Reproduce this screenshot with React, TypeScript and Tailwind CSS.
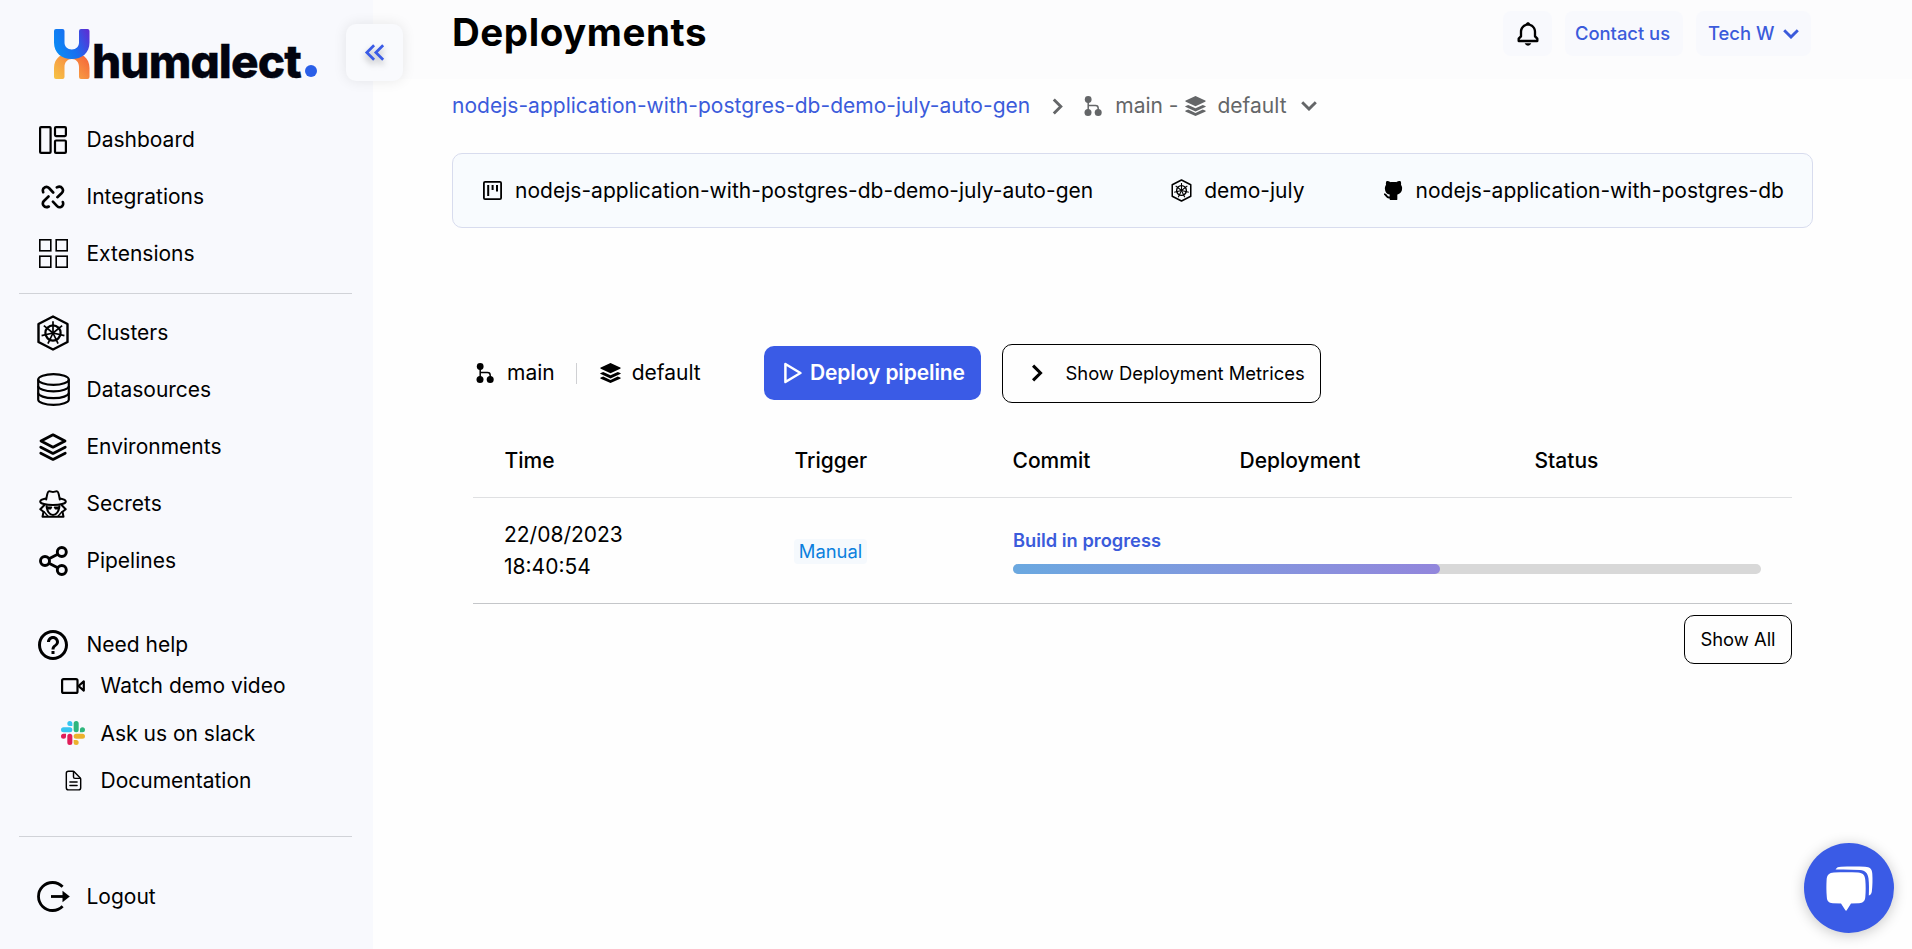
import React from "react";
import { BiBell } from "react-icons/bi";
import { MdHelpOutline, MdKeyboardDoubleArrowLeft } from "react-icons/md";
import { TbBrandGithubFilled } from "react-icons/tb";
import { IoDocumentTextOutline } from "react-icons/io5";

type IconProps = { className?: string };

function DashboardIcon() {
  return (
    <svg className="h-7 w-7" viewBox="0 0 28 28" fill="none" stroke="currentColor" strokeWidth="2.200">
      <rect x="1.100" y="1.100" width="10.500" height="25.800" rx="1" />
      <rect x="16" y="1.100" width="10.900" height="9" rx="1" />
      <rect x="16" y="14.500" width="10.900" height="12.400" rx="1" />
    </svg>
  );
}

function IntegrationsIcon() {
  return (
    <svg className="h-6 w-6" viewBox="0 0 24 24" fill="none" stroke="currentColor" strokeWidth="2.600" strokeLinecap="round" strokeLinejoin="round">
      <path d="M2.200 7.200C1.400 5 2.200 3 4 2.200c1.300-.6 2.900-.3 4 .8l4.200 4.500" />
      <path d="M15.800 2.400c2-1 4.300-.8 5.400.8 1.100 1.600.9 3.500-.4 4.800l-4.400 4.200" />
      <path d="M7.800 21.500c-2 1-4.200.6-5.300-1-1-1.500-.8-3.200.4-4.500l4.600-4.500" />
      <path d="M21.800 17c.9 2.100 0 4.200-1.900 5-1.300.5-2.700.2-3.800-.9l-4.200-4.500" />
    </svg>
  );
}

function ExtensionsIcon() {
  return (
    <svg className="h-[29px] w-[29px]" viewBox="0 0 29 29" fill="none" stroke="currentColor" strokeWidth="1.600">
      <rect x=".8" y=".8" width="11" height="11" />
      <rect x="17.200" y=".8" width="11" height="11" />
      <rect x=".8" y="17.200" width="11" height="11" />
      <rect x="17.200" y="17.200" width="11" height="11" />
    </svg>
  );
}

function ClusterIcon({ className }: IconProps) {
  const spokes = [0, 1, 2, 3, 4, 5, 6];
  return (
    <svg className={className} viewBox="0 0 32 36" fill="none" stroke="currentColor" strokeWidth="2.400">
      <path d="M16 1.500 30.500 9v18L16 34.500 1.500 27V9Z" strokeLinejoin="round" />
      <circle cx="16" cy="18" r="7.600" strokeWidth="2.200" />
      {spokes.map((s) => (
        <path key={s} d="M16 18V6.300" strokeWidth="1.700" transform={`rotate(${(s * 360) / 7} 16 18)`} />
      ))}
    </svg>
  );
}

function DatabaseIcon() {
  return (
    <svg className="h-[33px] w-[33px]" viewBox="0 0 33 33" fill="none" stroke="currentColor" strokeWidth="2.200">
      <ellipse cx="16.500" cy="6.500" rx="15.300" ry="5.400" />
      <path d="M1.200 6.500v20c0 3 6.800 5.400 15.300 5.400s15.300-2.400 15.300-5.400v-20" />
      <path d="M1.200 13c0 3 6.800 5.400 15.300 5.400S31.800 16 31.800 13M1.200 19.800c0 3 6.800 5.400 15.300 5.400s15.300-2.400 15.300-5.400" />
    </svg>
  );
}

function LayersOutlineIcon() {
  return (
    <svg className="h-7 w-7" viewBox="0 0 28 28" fill="none" stroke="currentColor" strokeWidth="2.800" strokeLinecap="round" strokeLinejoin="round">
      <path d="M14 1.800 26 8 14 14.200 2 8Z" />
      <path d="m1.800 14.200 12.200 6.200 12.200-6.200M1.800 20.200 14 26.400l12.200-6.200" />
    </svg>
  );
}

function SpyIcon() {
  return (
    <svg className="h-7 w-7" viewBox="0 0 28 28" fill="none" stroke="currentColor" strokeWidth="2" strokeLinejoin="round" strokeLinecap="round">
      <path d="M7.200 9.500C8 6 8.200 1.300 10.200 1.300c1.500 0 2.300.7 3.800.7s2.300-.7 3.800-.7c2 0 2.200 4.700 3 8.200" />
      <path d="M7 8.600C3.500 9.200 1.200 10.300 1.200 11.600c0 2 5.700 3.400 12.800 3.400s12.800-1.400 12.800-3.400c0-1.300-2.300-2.400-5.800-3" />
      <path d="M5.200 15.200 1.300 19.200l3.200 2.500M22.800 15.200l3.900 4-3.200 2.500M4.500 21.700l-1 5h21l-1-5" />
      <path d="M7.600 16.200c.4 5 3 8.800 6.400 8.800s6-3.800 6.400-8.800" />
      <path d="M8.500 17.300h4l-1 1.500H9.500ZM15.500 17.300h4l-1 1.500h-2ZM5 21.700l4 4.600M23 21.700l-4 4.600" strokeWidth="1.400" />
    </svg>
  );
}

function PipelinesIcon() {
  return (
    <svg className="h-[30px] w-[29px]" viewBox="0 0 29 30" fill="none" stroke="currentColor" strokeWidth="2.900">
      <circle cx="6" cy="15" r="4.500" />
      <circle cx="22.800" cy="6" r="4.500" />
      <circle cx="22.800" cy="24" r="4.500" />
      <path d="m10 12.800 8.700-4.600M10 17.200l8.700 4.600" />
    </svg>
  );
}

function VideoIcon() {
  return (
    <svg className="h-4 w-6" viewBox="0 0 24 16" fill="none" stroke="currentColor" strokeWidth="2.200" strokeLinejoin="round">
      <rect x="1.100" y="1.100" width="15.400" height="13.800" rx="1.500" />
      <path d="m17.500 8 5.300-4.600v9.200Z" />
    </svg>
  );
}

function SlackIcon() {
  return (
    <svg className="h-6 w-6" viewBox="0 0 24 24">
      <path fill="#E01E5A" d="M5.042 15.165a2.528 2.528 0 0 1-2.520 2.523A2.528 2.528 0 0 1 0 15.165a2.527 2.527 0 0 1 2.522-2.520h2.520zM6.313 15.165a2.527 2.527 0 0 1 2.521-2.520 2.527 2.527 0 0 1 2.521 2.520v6.313A2.528 2.528 0 0 1 8.834 24a2.528 2.528 0 0 1-2.521-2.522z" />
      <path fill="#36C5F0" d="M8.834 5.042a2.528 2.528 0 0 1-2.521-2.520A2.528 2.528 0 0 1 8.834 0a2.528 2.528 0 0 1 2.521 2.522v2.520zM8.834 6.313a2.528 2.528 0 0 1 2.521 2.521 2.528 2.528 0 0 1-2.521 2.521H2.522A2.528 2.528 0 0 1 0 8.834a2.528 2.528 0 0 1 2.522-2.521z" />
      <path fill="#2EB67D" d="M18.956 8.834a2.528 2.528 0 0 1 2.522-2.521A2.528 2.528 0 0 1 24 8.834a2.528 2.528 0 0 1-2.522 2.521h-2.522zM17.688 8.834a2.528 2.528 0 0 1-2.523 2.521 2.527 2.527 0 0 1-2.520-2.521V2.522A2.527 2.527 0 0 1 15.165 0a2.528 2.528 0 0 1 2.523 2.522z" />
      <path fill="#ECB22E" d="M15.165 18.956a2.528 2.528 0 0 1 2.523 2.522A2.528 2.528 0 0 1 15.165 24a2.527 2.527 0 0 1-2.520-2.522v-2.522zM15.165 17.688a2.527 2.527 0 0 1-2.520-2.523 2.526 2.526 0 0 1 2.520-2.520h6.313A2.527 2.527 0 0 1 24 15.165a2.528 2.528 0 0 1-2.522 2.523z" />
    </svg>
  );
}

function LogoutIcon() {
  return (
    <svg className="h-[31px] w-[33px]" viewBox="0 0 33 31" fill="none" stroke="currentColor" strokeWidth="2.800">
      <path d="M25.600 5.800A14 14 0 1 0 25.600 25.200" />
      <path d="M14 15.500h13" />
      <path d="M25.500 9.800 32.800 15.500l-7.300 5.700Z" fill="currentColor" stroke="none" />
    </svg>
  );
}

function BranchIcon() {
  return (
    <svg className="h-5 w-[18px] shrink-0" viewBox="0 0 18 20" fill="none">
      <circle cx="4.200" cy="3.500" r="3.400" fill="currentColor" />
      <circle cx="4" cy="16.500" r="3.500" fill="currentColor" />
      <circle cx="14.200" cy="16.500" r="3.500" fill="currentColor" />
      <path d="M4.200 3v14M4.200 9.500h7.300c1.700 0 2.700 1 2.700 2.700v3" stroke="currentColor" strokeWidth="1.500" />
    </svg>
  );
}

function StackIcon() {
  return (
    <svg className="h-5 w-[21px] shrink-0" viewBox="0 0 21 20" fill="currentColor">
      <path d="M10.500 0 20.200 4.600c.7.300.7.800 0 1.100L10.500 10.200.8 5.700C.1 5.400.1 4.900.8 4.600Z" />
      <path d="m3.200 8.900 7.300 3.300 7.300-3.300 2.400 1c.7.300.7.900 0 1.200l-9.700 4.300L.8 11.100c-.7-.3-.7-.9 0-1.200Z" />
      <path d="m3.200 13.600 7.300 3.300 7.300-3.300 2.400 1c.7.300.7.900 0 1.200L10.500 20 .8 15.800c-.7-.3-.7-.9 0-1.200Z" />
    </svg>
  );
}

function BoardIcon() {
  return (
    <svg className="h-[19px] w-[19px] shrink-0" viewBox="0 0 19 19" fill="none" stroke="currentColor" strokeWidth="1.800">
      <rect x=".9" y=".9" width="17.200" height="17.200" rx="1.200" />
      <path d="M5.200 4v11M9.600 4v5M14 4v6.500" strokeWidth="2" />
    </svg>
  );
}

function Chevron({ className, d = "m1.800 1.500 7 7-7 7", box = "0 0 11 17" }: IconProps & { d?: string; box?: string }) {
  return (
    <svg className={className} viewBox={box} fill="none" stroke="currentColor" strokeWidth="2.900">
      <path d={d} />
    </svg>
  );
}

function LogoMark() {
  return (
    <svg className="h-[50px] w-9 shrink-0" viewBox="0 0 36 50">
      <defs>
        <linearGradient id="markTop" x1="0" y1=".6" x2="1" y2=".2">
          <stop offset="0" stopColor="#0a8bf5" />
          <stop offset=".5" stopColor="#1a6df0" />
          <stop offset="1" stopColor="#5a30d4" />
        </linearGradient>
        <linearGradient id="markBottom" x1="0" y1="1" x2="1" y2=".3">
          <stop offset="0" stopColor="#f6c545" />
          <stop offset=".5" stopColor="#f79a43" />
          <stop offset="1" stopColor="#f5693a" />
        </linearGradient>
      </defs>
      <path d="M0 48V39C0 29 8 23.500 18 23.500S35.500 29 35.500 39v9a2 2 0 0 1-2 2h-6.500a2 2 0 0 1-2-2V38c0-5-3-8-7.200-8s-7.300 3-7.300 8v10a2 2 0 0 1-2 2H2a2 2 0 0 1-2-2Z" fill="url(#markBottom)" />
      <path d="M0 2a2 2 0 0 1 2-2h6.500a2 2 0 0 1 2 2v11.500c0 4 3 7 7.300 7s7.200-3 7.200-7V2a2 2 0 0 1 2-2h6.500a2 2 0 0 1 2 2v11.500C35.500 24 28 30 17.800 30S0 24 0 13.500Z" fill="url(#markTop)" />
    </svg>
  );
}

function NavItem({ icon, label }: { icon: React.ReactNode; label: string }) {
  return (
    <a className="flex h-[57px] items-center pl-[36px]">
      <span className="flex w-[34px] justify-center">{icon}</span>
      <span className="ml-[16.500px] text-[21px] leading-none">{label}</span>
    </a>
  );
}

function SubItem({ icon, label }: { icon: React.ReactNode; label: string }) {
  return (
    <a className="flex h-[47.500px] items-center pl-[61px]">
      <span className="flex w-6 justify-center">{icon}</span>
      <span className="ml-[15.500px] text-[21px] leading-none">{label}</span>
    </a>
  );
}

function Sidebar() {
  return (
    <aside className="flex h-[949px] w-[373px] shrink-0 flex-col bg-[#f8f9fd]">
      <div className="flex h-[111px] shrink-0 pl-[54px] pt-[29px]">
        <LogoMark />
        <span className="ml-[2px] h-[50px] w-[210px] shrink-0 whitespace-nowrap text-[46px] font-extrabold leading-[64px] tracking-[-0.900px] text-[#02040f] [font-feature-settings:'cv11'] [-webkit-text-stroke:0.400px_#02040f]">humalect</span>
        <span className="ml-[3px] mt-9 h-3 w-3 shrink-0 rounded-full bg-[#2a5fe8]" />
      </div>
      <nav>
        <NavItem icon={<DashboardIcon />} label="Dashboard" />
        <NavItem icon={<IntegrationsIcon />} label="Integrations" />
        <NavItem icon={<ExtensionsIcon />} label="Extensions" />
      </nav>
      <hr className="ml-[19px] mt-[11px] w-[333px] border-[#d1d3d8]" />
      <nav className="mt-[10px]">
        <NavItem icon={<ClusterIcon className="h-[36px] w-[32px]" />} label="Clusters" />
        <NavItem icon={<DatabaseIcon />} label="Datasources" />
        <NavItem icon={<LayersOutlineIcon />} label="Environments" />
        <NavItem icon={<SpyIcon />} label="Secrets" />
        <NavItem icon={<PipelinesIcon />} label="Pipelines" />
      </nav>
      <div className="mt-[27px]">
        <NavItem icon={<MdHelpOutline className="h-9 w-9 shrink-0" />} label="Need help" />
      </div>
      <div className="-mt-[11px]">
        <SubItem icon={<VideoIcon />} label="Watch demo video" />
        <SubItem icon={<SlackIcon />} label="Ask us on slack" />
        <SubItem icon={<IoDocumentTextOutline className="h-[23px] w-[23px]" />} label="Documentation" />
      </div>
      <hr className="ml-[19px] mt-[31px] w-[333px] border-[#d1d3d8]" />
      <div className="mt-[31.500px]">
        <NavItem icon={<LogoutIcon />} label="Logout" />
      </div>
    </aside>
  );
}

function Header() {
  return (
    <header className="flex h-[79px] shrink-0 bg-[#fcfcfd] pl-[79px] text-[18.400px] font-medium text-[#3b5bdb]">
      <h1 className="h-[65px] text-[38.500px] font-bold leading-[65px] tracking-[0.550px] text-black">Deployments</h1>
      <div className="ml-auto mr-[101px] flex items-start gap-[13px] pt-[11px]">
        <button className="flex h-[45px] w-[49px] items-center justify-center rounded-lg bg-[#f8f9fd] text-black">
          <BiBell className="h-7 w-7" />
        </button>
        <button className="h-[45px] w-[118px] rounded-lg bg-[#f8f9fd] pr-[3px]">Contact us</button>
        <button className="flex h-[45px] w-[115px] items-center rounded-lg bg-[#f8f9fd] pl-3">
          Tech W
          <Chevron className="ml-[9px] h-[10px] w-4" d="m1.200 1.200 6.800 6.800 6.800-6.800" box="0 0 16 10" />
        </button>
      </div>
    </header>
  );
}

function Breadcrumb() {
  return (
    <div className="flex h-[54px] items-center text-[21px] text-[#646668]">
      <span className="tracking-[0.020px] text-[#3b5bdb]">nodejs-application-with-postgres-db-demo-july-auto-gen</span>
      <Chevron className="ml-[22px] h-[17px] w-[11px]" />
      <span className="ml-[21px]"><BranchIcon /></span>
      <span className="ml-[13px]">main -</span>
      <span className="ml-[6px]"><StackIcon /></span>
      <span className="ml-3">default</span>
      <Chevron className="ml-[14px] h-[10px] w-4" d="m1.200 1.200 6.800 6.800 6.800-6.800" box="0 0 16 10" />
    </div>
  );
}

function InfoBar() {
  return (
    <section className="mt-5 flex h-[75px] w-[1361px] items-center justify-between rounded-[10px] border border-[#d8dcee] bg-[#f8fbfe] pl-[30px] pr-[28px] text-[21px] tracking-[0.020px]">
      <div className="flex items-center gap-[13px]"><BoardIcon />nodejs-application-with-postgres-db-demo-july-auto-gen</div>
      <div className="ml-[1px] flex items-center gap-3"><ClusterIcon className="h-[23px] w-[21px]" />demo-july</div>
      <div className="flex items-center gap-[11px]"><TbBrandGithubFilled className="h-[23px] w-[23px]" />nodejs-application-with-postgres-db</div>
    </section>
  );
}

function Actions() {
  return (
    <div className="flex h-[58px] items-center pl-[3px] text-[21px]">
      <BranchIcon />
      <span className="ml-[13px]">main</span>
      <span className="ml-[21px] h-[21px] w-px bg-[#cfd0d3]" />
      <span className="ml-[23px]"><StackIcon /></span>
      <span className="ml-[11px]">default</span>
      <button className="ml-auto flex h-[54px] w-[217px] items-center rounded-[10px] bg-[#3a5be6] pl-5 font-semibold text-white">
        <svg className="h-[22px] w-[18px]" viewBox="0 0 18 22" fill="none" stroke="currentColor" strokeWidth="2.500" strokeLinejoin="round">
          <path d="M1.400 2 16.400 11 1.400 20Z" />
        </svg>
        <span className="ml-2 tracking-[-0.120px]">Deploy pipeline</span>
      </button>
      <button className="ml-[21px] flex h-[59px] w-[319px] items-center rounded-[10px] border border-black pl-[28px] text-[18.400px]">
        <Chevron className="h-[18px] w-[12px]" />
        <span className="ml-[22.500px] pt-px">Show Deployment Metrices</span>
      </button>
    </div>
  );
}

function DeploymentsTable() {
  return (
    <div className="mt-[21px] w-[1319px]">
      <div className="grid h-[75px] grid-cols-[290px_218px_227px_295px_289px] items-center border-b border-[#dfe0e2] pt-[1px] text-[21px] font-medium">
        {["Time", "Trigger", "Commit", "Deployment", "Status"].map((name) => (
          <div key={name} className="px-[31.500px]">{name}</div>
        ))}
      </div>
      <div className="grid h-[106px] grid-cols-[290px_218px_811px] items-center border-b border-[#c4c6c9]">
        <div className="px-[31px] text-[21px] leading-8">22/08/2023<br />18:40:54</div>
        <div className="px-[31px] pt-[2px]"><span className="block h-[25px] w-[73px] rounded bg-[#f5f9fd] text-center text-[18.400px] leading-[25px] text-[#0b80dd]">Manual</span></div>
        <div className="pl-8 pr-[31px]">
          <div className="-mt-px text-[18.300px] font-semibold leading-[26px] text-[#3b5bdb]">Build in progress</div>
          <div className="mt-[11px] h-[10px] rounded-full bg-[#d8d8d8]">
            <div className="h-full w-[427px] rounded-full bg-linear-to-r from-[#6aa8e0] to-[#9286dc]" />
          </div>
        </div>
      </div>
      <button className="ml-auto mt-[11px] block h-[49px] w-[108px] rounded-[10px] border border-black text-[18.400px]">Show All</button>
    </div>
  );
}

export default function App() {
  return (
    <div className="relative flex h-[949px] w-[1912px] overflow-hidden bg-[#fefefe] font-['Inter',sans-serif] text-black">
      <Sidebar />
      <main className="flex min-w-0 flex-1 flex-col">
        <Header />
        <div className="pl-[79px]">
          <Breadcrumb />
          <InfoBar />
          <div className="ml-[21px] mt-[116px] w-[848px]"><Actions /></div>
          <div className="ml-[21px]"><DeploymentsTable /></div>
        </div>
      </main>
      <button className="absolute left-[346px] top-6 flex h-[57px] w-[57px] items-center justify-center rounded-[10px] bg-[#f9fafd] text-[#3a5be6] shadow-[0_0_14px_rgba(0,0,0,0.09)]">
        <MdKeyboardDoubleArrowLeft className="h-[33px] w-[33px] drop-shadow-[0_4px_3px_rgba(0,0,0,0.300)]" />
      </button>
      <button className="absolute left-[1804px] top-[843px] flex h-[90px] w-[90px] items-center justify-center rounded-full bg-[#3a5be6] shadow-[0_2px_14px_rgba(0,0,0,0.220)]">
        <svg className="h-[45px] w-[47px]" viewBox="0 0 47 45" fill="#fff">
          <path d="M8 6.500C3 6.800.8 9 .6 14 .3 19 .3 25 .8 31c.2 4 2 6 6 6.200L15 37.500l4.200 6.600c.4.800 1.300.8 1.700 0L25 37.500l8-.3c4-.2 6-2 6.300-6.200.5-6 .5-11 0-17-.4-5-2.300-7-7.300-7.500-8-.5-16-.5-24 0Z" />
          <path d="M9.500 3.500C11 1.300 12 1 15 .8 23 .3 32 .3 39 .8c5 .4 7 2 7.300 7 .4 6 .2 12-.5 18-.3 2-1.300 3.200-3 3.700.3-6 .3-12-.3-17-.8-5.500-3-8-8.500-8.500-8-.6-16-.7-24.500-.5Z" />
        </svg>
      </button>
    </div>
  );
}
